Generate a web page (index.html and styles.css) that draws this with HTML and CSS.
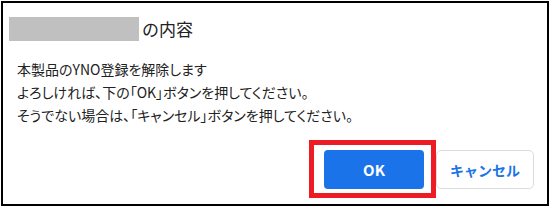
FILE: index.html
```html
<!DOCTYPE html>
<html lang="ja">
<head>
  <meta charset="UTF-8">
  <title>登録解除の確認</title>
  <link rel="stylesheet" href="styles.css">
</head>
<body>
  <div class="dialog">
    <div class="dialog-title">
      <span class="title-mask"></span>
      <span class="title-text">の内容</span>
    </div>
    <div class="dialog-message">
      <p>本製品のYNO登録を解除します</p>
      <p>よろしければ、下の「OK」ボタンを押してください。</p>
      <p>そうでない場合は、「キャンセル」ボタンを押してください。</p>
    </div>
    <div class="dialog-actions">
      <div class="ok-wrap">
        <button class="btn btn-ok">OK</button>
        <span class="mark"></span>
      </div>
      <button class="btn btn-cancel">キャンセル</button>
    </div>
  </div>
</body>
</html>
```

FILE: styles.css
```css
body {
  margin: 1px 0 0 1px;
  background-color: white;
  font-family: "Noto Sans CJK JP", "Noto Sans", sans-serif;
  color: #222;
}
.dialog {
  box-sizing: border-box;
  width: 548px;
  height: 205px;
  border: 2px solid #000;
  padding: 14px 13px 15px 6px;
  display: flex;
  flex-direction: column;
}
.dialog-title {
  display: flex;
  align-items: center;
  gap: 3px;
  height: 24px;
}
.title-mask {
  width: 130px;
  height: 24px;
  background-color: #c0c0c0;
}
.title-text {
  font-size: 17px;
  line-height: 24px;
}
.dialog-message {
  margin-top: 17px;
  padding-left: 8px;
  font-size: 14px;
  line-height: 23px;
  font-feature-settings: "palt";
}
.dialog-message p {
  margin: 0;
}
.dialog-actions {
  margin-top: auto;
  display: flex;
  justify-content: flex-end;
  gap: 12px;
}
.ok-wrap {
  position: relative;
}
.btn {
  height: 39px;
  font-family: "Noto Sans CJK JP", "Noto Sans", sans-serif;
  font-weight: bold;
  cursor: pointer;
}
.btn-ok {
  width: 100px;
  background-color: #1a73e8;
  color: white;
  border: none;
  border-radius: 4px;
  font-size: 15px;
}
.btn-cancel {
  width: 98px;
  background-color: white;
  color: #1a73e8;
  border: 1px solid #dadce0;
  border-radius: 5px;
  font-size: 14px;
}
.mark {
  position: absolute;
  top: -10px;
  left: -15px;
  right: -12px;
  bottom: -9px;
  border: 5px solid #ed1c24;
  z-index: 1;
}
```
